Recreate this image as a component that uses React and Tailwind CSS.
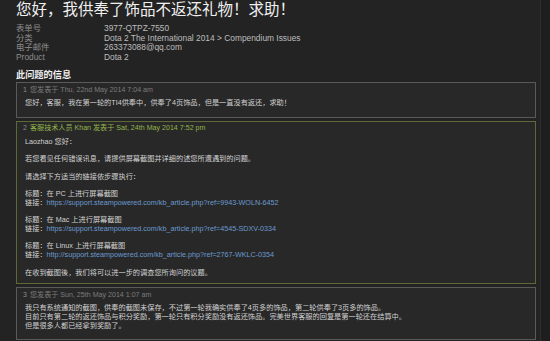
import React from "react";

const FONT = { fontFamily: '"Liberation Sans", Arial, "Noto Sans CJK SC", sans-serif' };

function Box({ border, num, head, headColor, pb, children }) {
  return (
    <div className={`border ${border} bg-[#282828] pt-[2.5px] ${pb}`}>
      <div className="pl-[6px] text-[7.1px] leading-[9px] whitespace-nowrap">
        <span className="text-[#8a8a8a]">{num}</span>
        <span className={`ml-[3px] ${headColor}`}>{head}</span>
      </div>
      <div className="mt-[4.5px] pl-[8px] text-[7.2px] leading-[8.8px] text-[#d2d2d2] flex flex-col gap-[8.6px]">
        {children}
      </div>
    </div>
  );
}

const Link = ({ children }) => <span className="text-[#6b9bd1]">{children}</span>;

export default function App() {
  return (
    <div className="w-[550px] h-[341px] overflow-hidden flex bg-[#1f1f1f]" style={FONT}>
      <div className="w-[541px] shrink-0 bg-[#232323] pl-[16px] pr-[5px] pt-[1px] border-r border-[#2c2c2c]">
        <h1 className="text-[15.5px] leading-[18px] text-[#f0f0f0] font-normal whitespace-nowrap">
          您好，我供奉了饰品不返还礼物！求助！
        </h1>
        <div className="mt-[5px] grid grid-cols-[88px_1fr] text-[8.4px] leading-[9.5px]">
          <div className="text-[#8c8c8c]">表单号</div>
          <div className="text-[#bdbdbd]">3977-QTPZ-7550</div>
          <div className="text-[#8c8c8c]">分类</div>
          <div className="text-[#bdbdbd]">Dota 2 The International 2014 &gt; Compendium Issues</div>
          <div className="text-[#8c8c8c]">电子邮件</div>
          <div className="text-[#bdbdbd]">263373088@qq.com</div>
          <div className="text-[#8c8c8c]">Product</div>
          <div className="text-[#bdbdbd]">Dota 2</div>
        </div>
        <h2 className="mt-[8px] text-[9.2px] leading-[11px] font-bold text-[#f0f0f0]">此问题的信息</h2>
        <div className="mt-[1px] w-[520px] flex flex-col gap-[3px]">
          <Box border="border-[#5a5a5a]" pb="pb-[9px]" num="1" head="您发表于 Thu, 22nd May 2014 7:04 am" headColor="text-[#7c7c7c]">
            <p>您好，客服，我在第一轮的TI4供奉中，供奉了4页饰品，但是一直没有返还，求助！</p>
          </Box>
          <Box border="border-[#5d6a38]" pb="pb-[6px]" num="2" head="客服技术人员 Khan 发表于 Sat, 24th May 2014 7:52 pm" headColor="text-[#93b548]">
            <p>Laozhao 您好：</p>
            <p>若您看见任何错误讯息，请提供屏幕截图并详细的述您所遭遇到的问题。</p>
            <p>请选择下方适当的链接依步骤执行：</p>
            <p>
              标题：在 PC 上进行屏幕截图<br />
              链接：<Link>https://support.steampowered.com/kb_article.php?ref=9943-WOLN-6452</Link>
            </p>
            <p>
              标题：在 Mac 上进行屏幕截图<br />
              链接：<Link>https://support.steampowered.com/kb_article.php?ref=4545-SDXV-0334</Link>
            </p>
            <p>
              标题：在 Linux 上进行屏幕截图<br />
              链接：<Link>http://support.steampowered.com/kb_article.php?ref=2767-WKLC-0354</Link>
            </p>
            <p>在收到截图後，我们将可以进一步的调查您所询问的议题。</p>
          </Box>
          <Box border="border-[#5a5a5a]" pb="pb-[8px]" num="3" head="您发表于 Sun, 25th May 2014 1:07 am" headColor="text-[#7c7c7c]">
            <p>
              我只有系统通知的截图，供奉的截图未保存，不过第一轮我确实供奉了4页多的饰品，第二轮供奉了3页多的饰品。<br />
              目前只有第二轮的返还饰品与积分奖励，第一轮只有积分奖励没有返还饰品。完美世界客服的回复是第一轮还在结算中。<br />
              但是很多人都已经拿到奖励了。
            </p>
          </Box>
        </div>
      </div>
      <div className="flex-1 bg-[#1e1e1e]" />
    </div>
  );
}
